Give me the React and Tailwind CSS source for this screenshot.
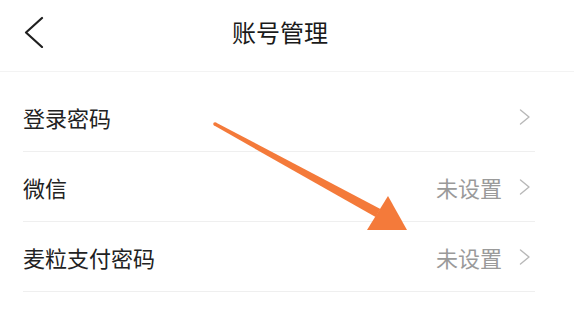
const rows = [
  { label: "登录密码", value: "" },
  { label: "微信", value: "未设置" },
  { label: "麦粒支付密码", value: "未设置" },
];

function Chevron() {
  return (
    <svg width="12" height="16" viewBox="0 0 12 16" fill="none">
      <polyline
        points="1.5,1 10,8 1.5,15"
        stroke="#b8b8b8"
        strokeWidth="1.4"
        strokeLinecap="round"
        strokeLinejoin="round"
      />
    </svg>
  );
}

export default function App() {
  return (
    <div
      className="relative w-[574px] h-[315px] bg-white overflow-hidden"
      style={{ fontFamily: '"Noto Sans CJK SC", "Noto Sans", sans-serif' }}
    >
      {/* Header */}
      <div className="h-[72px] flex items-center border-b border-[#f3f3f3] px-[24px] pb-[8px]">
        <div className="w-[60px]">
          <svg width="20" height="32" viewBox="0 0 20 32" fill="none">
            <polyline
              points="18,2 2,16.5 18,31"
              stroke="#1f1f1f"
              strokeWidth="2.2"
              strokeLinecap="round"
              strokeLinejoin="round"
            />
          </svg>
        </div>
        <div className="flex-1 text-center text-[24px] text-[#1a1a1a] leading-none">
          账号管理
        </div>
        <div className="w-[74px]" />
      </div>

      {/* List */}
      <div className="ml-[23px] w-[512px] pt-[10px]">
        {rows.map((row) => (
          <div
            key={row.label}
            className="h-[70px] flex items-center justify-between border-b border-[#efefef] pr-[4px]"
          >
            <span className="text-[22px] text-[#222222] leading-none">
              {row.label}
            </span>
            <div className="flex items-center gap-[17px]">
              {row.value && (
                <span className="text-[22px] text-[#9a9a9a] leading-none">
                  {row.value}
                </span>
              )}
              <Chevron />
            </div>
          </div>
        ))}
      </div>

      {/* Annotation arrow */}
      <svg
        className="absolute inset-0 pointer-events-none"
        width="574"
        height="315"
        viewBox="0 0 574 315"
      >
        <polygon
          points="214.2,125.6 215.8,122.4 380.4,209 375.6,217"
          fill="#f47a3a"
        />
        <circle cx="215" cy="124" r="1.8" fill="#f47a3a" />
        <polygon points="388,196 367,230 407,230" fill="#f47a3a" />
      </svg>
    </div>
  );
}
